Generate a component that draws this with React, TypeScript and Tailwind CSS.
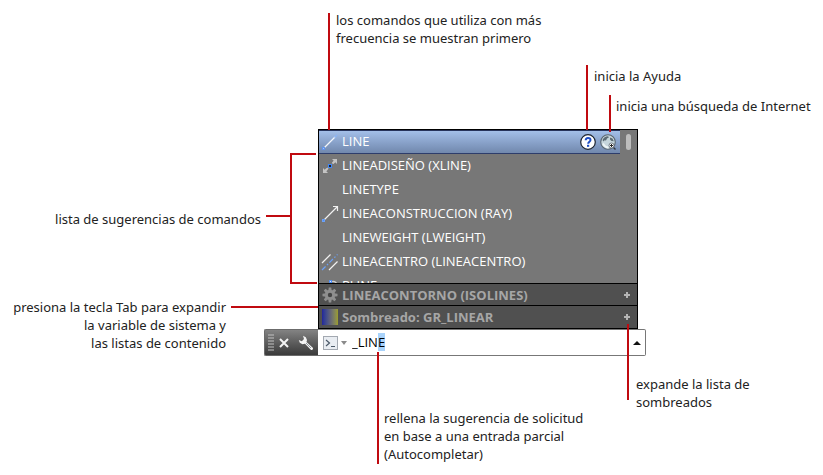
import React, { useEffect, useRef } from 'react';

const LineIcon = () => (
  <svg className="h-6 w-5 shrink-0" viewBox="0 0 20 24" aria-hidden="true">
    <path d="M5.5 17.5 16 7" stroke="#f4f7fc" strokeWidth="1.2" />
    <path d="m15.500 7.500 2.500-2.500" stroke="#8ab4f7" strokeWidth="1.300" />
    <rect x="3.500" y="17.500" width="2" height="2" fill="#a9c6f4" stroke="#6196f0" />
  </svg>
);

const XlineIcon = () => (
  <svg className="h-6 w-5 shrink-0" viewBox="0 0 20 24" aria-hidden="true">
    <path d="M5 18 16 7" stroke="#c4c4c4" strokeWidth="1.2" strokeDasharray="3 1" />
    <path d="M13 5h5v5l-1.700-1.700-1.800 1.700-1.500-1.500 1.700-1.800ZM4 14v5h5l-1.700-1.700 1.700-1.800L7.500 14l-1.800 1.700Z" fill="#c4c4c4" />
    <rect x="9.500" y="10.500" width="3" height="3" fill="#222" stroke="#3f86f5" />
  </svg>
);

const RayIcon = () => (
  <svg className="h-6 w-5 shrink-0" viewBox="0 0 20 24" aria-hidden="true">
    <path d="M5.500 17.500 18 5M14 4.500h4.500V9" fill="none" stroke="#f2f2f2" strokeWidth="1.200" />
    <rect x="3.500" y="17.500" width="2" height="2" fill="#4d8df5" stroke="#6ba1f8" />
  </svg>
);

const CenterlineIcon = () => (
  <svg className="h-6 w-5 shrink-0" viewBox="0 0 20 24" aria-hidden="true">
    <path d="M3 13 11.500 4.500M10 20l8.500-8.500" stroke="#f2f2f2" strokeWidth="1.200" />
    <path d="M3 20 18.500 4.500" stroke="#6ba1f8" strokeWidth="1.200" strokeDasharray="5 2 1.500 2" />
  </svg>
);

const PlineIcon = () => (
  <svg className="h-6 w-5 shrink-0" viewBox="0 0 20 24" aria-hidden="true">
    <path d="M13 7.500c3-.5 5 1 4.500 4-.5 4-6 4-10 6" fill="none" stroke="#cfcfcf" strokeWidth="1.200" />
    <rect x="10.500" y="6.500" width="2" height="2" fill="#dce8ff" stroke="#4d8df5" />
  </svg>
);

const GearIcon = () => (
  <svg className="h-4 w-4 shrink-0" viewBox="0 0 16 16" aria-hidden="true">
    <g fill="#8f8f8f">
      {[0, 45, 90, 135, 180, 225, 270, 315].map((angle) => (
        <path key={angle} d="M6.200 4 6.800.5h2.400L9.800 4Z" transform={`rotate(${angle} 8 8)`} />
      ))}
    </g>
    <circle cx="8" cy="8" r="3.600" fill="#454545" stroke="#8f8f8f" strokeWidth="2.800" />
  </svg>
);

const PlusIcon = () => (
  <svg className="size-2" viewBox="0 0 8 8" aria-hidden="true">
    <path d="M4 1v6M1 4h6" stroke="#b5b5b5" strokeWidth="2" />
  </svg>
);

const HelpIcon = () => (
  <svg className="size-4" viewBox="0 0 16 16" aria-hidden="true">
    <circle cx="8" cy="8" r="7.300" fill="#fff" stroke="#1d2430" strokeWidth="1.200" />
    <path d="M5.700 6.200c0-3 4.800-3 4.800-.3 0 1.900-2.300 1.700-2.300 3.900" fill="none" stroke="#1c4cc4" strokeWidth="2" />
    <rect x="7" y="10.800" width="2.200" height="2" fill="#1c4cc4" />
  </svg>
);

const GlobeIcon = () => (
  <svg className="size-4" viewBox="0 0 16 16" aria-hidden="true">
    <circle cx="8" cy="8" r="7.300" fill="#c6d6dc" stroke="#5a6670" strokeWidth="1.100" />
    <path d="M2.500 6C3.500 3.500 5.500 2.200 8 2.200l1 1L7 4.500 6 6.500l-1.500-.3-1 1.300ZM10 3.500l2.500 1 1.300 2.700-2.300-.2L10 5.500Z" fill="#5c6b74" />
    <path d="M3 9.500c1.300 2.500 3 4 5.500 4" fill="none" stroke="#eef5f6" strokeWidth="1.800" />
    <path d="m13 13 2.500 2.500" stroke="#333b45" strokeWidth="1.400" />
    <circle cx="11.500" cy="11.500" r="2.500" fill="#fff" stroke="#59636d" strokeWidth=".8" />
    <path d="M11.500 10v3M10 11.500h3" stroke="#222" />
  </svg>
);

const WrenchIcon = () => (
  <svg className="size-4" viewBox="0 0 16 16" aria-hidden="true">
    <path
      d="M5 .8 7.800 2.200 9 5 8.500 7l6.300 5.800c.9 1.400-.6 2.900-2 2L7 8.800l-2.500.4L1.800 7.800.8 5l3 1.200L6 4Z"
      fill="#f4f4f4"
    />
    <path d="m8 8 5 5" stroke="#8f969c" strokeWidth="1" />
  </svg>
);

const PromptIcon = () => (
  <svg className="h-4 w-4" viewBox="0 0 16 16" aria-hidden="true">
    <rect x=".5" y="1.500" width="14" height="13" fill="#e9edf2" stroke="#a3a9b1" />
    <path d="m3 5 3.500 3L3 11M8 11.500h4" fill="none" stroke="#4b5968" strokeWidth="1.200" />
  </svg>
);

const suggestions: { label: string; icon?: React.FC }[] = [
  { label: 'LINEADISEÑO (XLINE)', icon: XlineIcon },
  { label: 'LINETYPE' },
  { label: 'LINEACONSTRUCCION (RAY)', icon: RayIcon },
  { label: 'LINEWEIGHT (LWEIGHT)' },
  { label: 'LINEACENTRO (LINEACENTRO)', icon: CenterlineIcon },
  { label: 'PLINE', icon: PlineIcon },
];

const SuggestionList = () => (
  <div className="ml-[54px] w-[320px] border border-black bg-[#777777] text-[13px] leading-4 text-white">
    <div className="flex h-[153px] overflow-hidden">
      <ul className="min-w-0 flex-1">
        <li className="flex h-6 items-center gap-[3px] border-y border-t-[#27345c] border-b-[#2d3d6b] bg-linear-to-b from-[#a3bfe9] to-[#7188ad] pr-1">
          <LineIcon />
          <span className="flex-1 pb-0.5">LINE</span>
          <button type="button" aria-label="Ayuda" className="mr-1">
            <HelpIcon />
          </button>
          <button type="button" aria-label="Buscar en Internet" className="-ml-[3px]">
            <GlobeIcon />
          </button>
        </li>
        {suggestions.map(({ label, icon: Icon }) => (
          <li key={label} className="flex h-6 items-center gap-[3px]">
            {Icon ? <Icon /> : <span className="w-5" />}
            <span className="pb-0.5">{label}</span>
          </li>
        ))}
      </ul>
      <div className="w-[17px] pt-1 pl-[6px]">
        <div className="h-4 w-[5px] rounded-full bg-[#bdbdbd]" />
      </div>
    </div>
    <CategoryRow icon={<GearIcon />} label="LINEACONTORNO (ISOLINES)" />
    <CategoryRow
      icon={<span className="size-4 bg-linear-to-r from-[#24249c] via-[#62627a] to-[#9c9c28]" />}
      label="Sombreado: GR_LINEAR"
    />
  </div>
);

const CategoryRow = ({ icon, label }: { icon: React.ReactNode; label: string }) => (
  <button
    type="button"
    className="flex h-[22px] w-full items-center gap-1 border-t border-black bg-[#505050] pr-[6px] pl-[3px] text-left font-bold text-[#a6a6a6] last:h-[23px]"
  >
    {icon}
    <span className="flex-1">{label}</span>
    <PlusIcon />
  </button>
);

const CommandBar = () => {
  const inputRef = useRef<HTMLInputElement>(null);

  // The completed part of the command stays selected so typing replaces it
  useEffect(() => {
    inputRef.current?.focus();
    inputRef.current?.setSelectionRange(4, 5);
  }, []);

  return (
    <div className="flex h-[27px]">
      <div className="flex w-[54px] items-center rounded-l-xs border border-r-0 border-[#6b6b6b] bg-linear-to-b from-[#838383] to-[#3b3b3b] pl-[3px]">
        <svg className="h-[17px] w-[6px]" viewBox="0 0 6 17" aria-hidden="true">
          <path d="M1 0v17M3 0v17M5 0v17" stroke="#c2c2c2" strokeWidth="1" strokeDasharray="2 1" />
        </svg>
        <button type="button" aria-label="Cerrar" className="ml-[5px]">
          <svg className="size-[10px]" viewBox="0 0 10 10" aria-hidden="true">
            <path d="m1 1 8 8M9 1 1 9" stroke="#f5f5f5" strokeWidth="2" />
          </svg>
        </button>
        <button type="button" aria-label="Personalizar" className="ml-[9px]">
          <WrenchIcon />
        </button>
      </div>
      <div className="flex flex-1 items-center rounded-r-xs border border-l-0 border-[#777777] bg-white pr-1 pl-[5px]">
        <button type="button" aria-label="Comandos recientes" className="flex items-center gap-[2px]">
          <PromptIcon />
          <svg className="h-1 w-[6px]" viewBox="0 0 6 4" aria-hidden="true">
            <path d="M0 0h6L3 4Z" fill="#8a8a8a" />
          </svg>
        </button>
        <input
          ref={inputRef}
          aria-label="Línea de comando"
          defaultValue="_LINE"
          className="ml-[5px] min-w-0 flex-1 pb-0.5 text-[13px] text-black outline-none selection:bg-[#a9d3fb] selection:text-black"
        />
        <button type="button" aria-label="Historial">
          <svg className="h-1 w-2" viewBox="0 0 8 4" aria-hidden="true">
            <path d="M4 0 8 4H0Z" fill="#111" />
          </svg>
        </button>
      </div>
    </div>
  );
};

const LeaderLines = () => (
  <svg className="pointer-events-none absolute inset-0 size-full" aria-hidden="true">
    <g fill="none" stroke="#c00a10" strokeWidth="2">
      <path d="M329 13v117" />
      <path d="M587 65v65" />
      <path d="M610 95v37" />
      <path d="M316 154h-25v129h26M266 216h25" />
      <path d="M231 307h87" />
      <path d="M378 352v112" />
      <path d="M628 324v76" />
    </g>
  </svg>
);

const App = () => (
  <main className="relative min-h-screen bg-white font-['Noto_Sans','Open_Sans',sans-serif] text-[13px] leading-[18px] text-[#222222]">
    <div className="flex h-[129px] flex-col whitespace-nowrap">
      <p className="pt-[11px] pl-[336px]">
        los comandos que utiliza con más
        <br />
        frecuencia se muestran primero
      </p>
      <p className="pt-5 pl-[594px]">inicia la Ayuda</p>
      <p className="pt-3 pl-[616px]">inicia una búsqueda de Internet</p>
    </div>
    <div className="flex">
      <div className="flex w-[264px] shrink-0 flex-col items-end text-right">
        <p className="pt-[81px] pr-[3px]">lista de sugerencias de comandos</p>
        <p className="pt-[70px] pr-[38px]">
          presiona la tecla Tab para expandir
          <br />
          la variable de sistema y
          <br />
          las listas de contenido
        </p>
      </div>
      <section aria-label="Línea de comando" className="w-[382px] shrink-0 font-['Open_Sans','Noto_Sans',sans-serif]">
        <SuggestionList />
        <CommandBar />
      </section>
    </div>
    <div className="flex whitespace-nowrap pl-[384px]">
      <p className="w-[252px] pt-[53px]">
        rellena la sugerencia de solicitud
        <br />
        en base a una entrada parcial
        <br />
        (Autocompletar)
      </p>
      <p className="pt-[19px]">
        expande la lista de
        <br />
        sombreados
      </p>
    </div>
    <LeaderLines />
  </main>
);

export default App;
